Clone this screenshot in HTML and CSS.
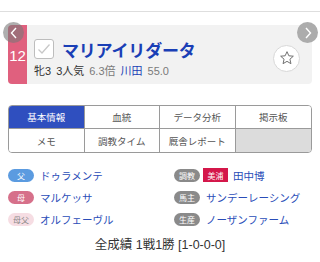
FILE: index.html
```html
<!DOCTYPE html>
<html lang="ja">
<head>
<meta charset="utf-8">
<link rel="stylesheet" href="styles.css">
</head>
<body>
<div class="topbar"></div>
<div class="card-wrap">
  <div class="card">
    <div class="num">12</div>
    <div class="content">
      <div class="row1">
        <span class="check">
          <svg width="14" height="12" viewBox="0 0 14 12"><path d="M1.5 6.5 L5 10 L12.5 1.5" fill="none" stroke="#c8c8c8" stroke-width="1.3"/></svg>
        </span>
        <span class="name">マリアイリダータ</span>
      </div>
      <div class="row2">
        <span class="dark">牝3</span><span class="dark">3人気</span><span class="gray">6.3倍</span><span class="blue">川田</span><span class="gray">55.0</span>
      </div>
    </div>
    <div class="star">
      <svg width="16" height="16" viewBox="0 0 24 24"><path d="M12 2.5 L14.8 8.7 L21.5 9.3 L16.4 13.8 L17.9 20.5 L12 17 L6.1 20.5 L7.6 13.8 L2.5 9.3 L9.2 8.7 Z" fill="none" stroke="#666" stroke-width="1.4" stroke-linejoin="round"/></svg>
    </div>
  </div>
  <div class="arrow left"><svg width="10" height="12" viewBox="0 0 10 12"><path d="M7 1 L2.5 6 L7 11" fill="none" stroke="#fff" stroke-width="1.4"/></svg></div>
  <div class="arrow right"><svg width="10" height="12" viewBox="0 0 10 12"><path d="M3 1 L7.5 6 L3 11" fill="none" stroke="#fff" stroke-width="1.4"/></svg></div>
</div>

<div class="tabs">
  <div class="tab active">基本情報</div>
  <div class="tab">血統</div>
  <div class="tab">データ分析</div>
  <div class="tab">掲示板</div>
  <div class="tab">メモ</div>
  <div class="tab">調教タイム</div>
  <div class="tab">厩舎レポート</div>
  <div class="tab empty"></div>
</div>

<div class="info">
  <div class="col">
    <div class="irow"><span class="badge father">父</span><span class="link">ドゥラメンテ</span></div>
    <div class="irow"><span class="badge mother">母</span><span class="link">マルケッサ</span></div>
    <div class="irow"><span class="badge mfather">母父</span><span class="link">オルフェーヴル</span></div>
  </div>
  <div class="col">
    <div class="irow"><span class="badge gray-b">調教</span><span class="tag">美浦</span><span class="link">田中博</span></div>
    <div class="irow"><span class="badge gray-b">馬主</span><span class="link">サンデーレーシング</span></div>
    <div class="irow"><span class="badge gray-b">生産</span><span class="link">ノーザンファーム</span></div>
  </div>
</div>

<div class="record">全成績 1戦1勝 [1-0-0-0]</div>
</body>
</html>
```
FILE: styles.css
```css
* { box-sizing: border-box; }
body {
  margin: 0;
  width: 320px;
  height: 262px;
  overflow: hidden;
  background: #fff;
  font-family: "Liberation Sans", "Noto Sans CJK JP", sans-serif;
  color: #333;
}
.topbar {
  height: 12px;
  border-bottom: 1px solid #dedede;
}
.card-wrap {
  position: relative;
  margin: 13px 8px 0 8px;
}
.card {
  display: flex;
  align-items: stretch;
  height: 59px;
  background: #f2f2f2;
  border-radius: 4px;
  overflow: hidden;
}
.num {
  width: 19px;
  background: #e0607e;
  color: #fff;
  font-size: 15px;
  display: flex;
  align-items: center;
  justify-content: center;
  padding-top: 2px;
}
.content {
  flex: 1;
  padding: 14px 0 0 7px;
}
.row1 {
  display: flex;
  align-items: center;
  gap: 8px;
  height: 20px;
}
.check {
  width: 20px;
  height: 20px;
  background: #fff;
  border: 1px solid #bdbdbd;
  border-radius: 3px;
  display: flex;
  align-items: center;
  justify-content: center;
}
.name {
  font-size: 17px;
  font-weight: bold;
  color: #1a3fb6;
  letter-spacing: -0.2px;
}
.row2 {
  margin-top: 4px;
  font-size: 11px;
  line-height: 16px;
  white-space: nowrap;
  display: flex;
  gap: 5px;
}
.row2 .dark { color: #333; }
.row2 .gray { color: #7a7a7a; }
.row2 .blue { color: #1a3fb6; }
.star {
  align-self: center;
  margin: 7px 12px 0 0;
  width: 27px;
  height: 27px;
  border-radius: 50%;
  background: #fff;
  border: 1px solid #d8d8d8;
  display: flex;
  align-items: center;
  justify-content: center;
}
.arrow {
  position: absolute;
  top: -3px;
  width: 21px;
  height: 21px;
  border-radius: 50%;
  display: flex;
  align-items: center;
  justify-content: center;
}
.arrow.left { left: -5px; background: rgba(120,120,120,0.6); }
.arrow.right { right: -6px; background: #acacac; }

.tabs {
  margin: 21px 8px 0 8px;
  display: grid;
  grid-template-columns: repeat(4, 1fr);
  grid-auto-rows: 23px;
  border: 1px solid #9a9a9a;
  border-radius: 4px;
  overflow: hidden;
}
.tab {
  display: flex;
  align-items: center;
  justify-content: center;
  font-size: 9.5px;
  color: #555;
  background: #fff;
  border-right: 1px solid #9a9a9a;
  border-bottom: 1px solid #9a9a9a;
}
.tab:nth-child(4n) { border-right: none; }
.tab:nth-child(n+5) { border-bottom: none; }
.tab.active { background: #2f4fbf; color: #fff; }
.tab.empty { background: #dcdcdc; }

.info {
  display: flex;
  margin: 11px 8px 0 8px;
}
.col { display: flex; flex-direction: column; }
.col:first-child { width: 166px; }
.irow {
  display: flex;
  align-items: center;
  height: 22px;
}
.badge {
  width: 26px;
  height: 13px;
  border-radius: 7px;
  font-size: 8px;
  color: #fff;
  display: flex;
  align-items: center;
  justify-content: center;
  margin-right: 6px;
}
.badge.father { background: #5b9be0; }
.badge.mother { background: #d6708a; }
.badge.mfather { background: #f6dde3; color: #888; }
.badge.gray-b { background: #8a8a8a; }
.tag {
  width: 25px;
  height: 14px;
  background: #d4174a;
  color: #fff;
  font-size: 8px;
  display: flex;
  align-items: center;
  justify-content: center;
  margin: 0 5px 0 -3px;
}
.link {
  font-size: 10.5px;
  color: #2a4db8;
}
.record {
  margin-top: 7px;
  text-align: center;
  font-size: 12.5px;
  line-height: 16px;
  color: #333;
}
```
